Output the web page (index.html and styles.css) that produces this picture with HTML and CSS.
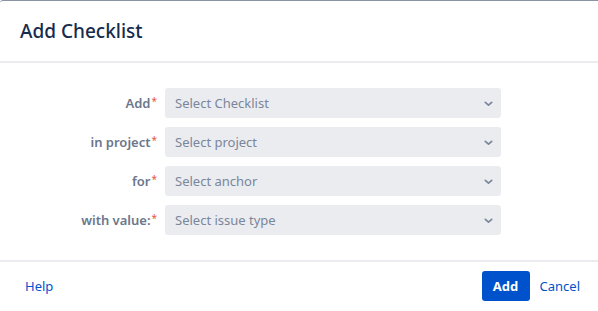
FILE: index.html
```html
<!DOCTYPE html>
<html lang="en">
<head>
    <meta charset="UTF-8">
    <meta name="viewport" content="width=device-width, initial-scale=1.0">
    <title>Add Checklist</title>
    <link rel="stylesheet" href="styles.css">
</head>
<body>
    <div class="dialog">
        <div class="dialog-header">
            <h1>Add Checklist</h1>
        </div>

        <!-- Form fields -->
        <div class="dialog-body">
            <div class="form-grid">
                <label class="field-label">Add<span class="req">*</span></label>
                <div class="select-box">
                    <span class="placeholder">Select Checklist</span>
                    <svg class="chevron" width="9" height="6" viewBox="0 0 9 6"><path d="M1.3 1.3 L4.5 4.2 L7.7 1.3" fill="none" stroke="#7a869a" stroke-width="1.7" stroke-linecap="round" stroke-linejoin="round"/></svg>
                </div>

                <label class="field-label">in project<span class="req">*</span></label>
                <div class="select-box">
                    <span class="placeholder">Select project</span>
                    <svg class="chevron" width="9" height="6" viewBox="0 0 9 6"><path d="M1.3 1.3 L4.5 4.2 L7.7 1.3" fill="none" stroke="#7a869a" stroke-width="1.7" stroke-linecap="round" stroke-linejoin="round"/></svg>
                </div>

                <label class="field-label">for<span class="req">*</span></label>
                <div class="select-box">
                    <span class="placeholder">Select anchor</span>
                    <svg class="chevron" width="9" height="6" viewBox="0 0 9 6"><path d="M1.3 1.3 L4.5 4.2 L7.7 1.3" fill="none" stroke="#7a869a" stroke-width="1.7" stroke-linecap="round" stroke-linejoin="round"/></svg>
                </div>

                <label class="field-label">with value:<span class="req">*</span></label>
                <div class="select-box">
                    <span class="placeholder">Select issue type</span>
                    <svg class="chevron" width="9" height="6" viewBox="0 0 9 6"><path d="M1.3 1.3 L4.5 4.2 L7.7 1.3" fill="none" stroke="#7a869a" stroke-width="1.7" stroke-linecap="round" stroke-linejoin="round"/></svg>
                </div>
            </div>
        </div>

        <div class="dialog-footer">
            <a class="link" href="#">Help</a>
            <div class="actions">
                <button class="primary">Add</button>
                <a class="link" href="#">Cancel</a>
            </div>
        </div>
    </div>
</body>
</html>
```

FILE: styles.css
```css
body {
    margin: 0;
    font-family: "Noto Sans", "Open Sans", sans-serif;
    font-size: 14px;
    background-color: #fff;
    color: #172b4d;
}

.dialog {
    border-top: 1px solid #8993a4;
    border-top-left-radius: 3px;
    height: 310px;
    display: flex;
    flex-direction: column;
}

.dialog-header {
    height: 60px;
    display: flex;
    align-items: center;
    padding: 0 20px;
    border-bottom: 2px solid #ebecf0;
}

.dialog-header h1 {
    margin: 0;
    font-size: 19px;
    font-weight: 500;
    color: #172b4d;
}

.dialog-body {
    padding: 25px 0 25px 0;
    border-bottom: 2px solid #ebecf0;
}

.form-grid {
    display: grid;
    grid-template-columns: 157px 336px;
    column-gap: 8px;
    row-gap: 9px;
    align-items: center;
}

.field-label {
    text-align: right;
    font-weight: 600;
    font-size: 13px;
    color: #6b778c;
}

.req {
    color: #e5573a;
    font-size: 10px;
    font-weight: 400;
    vertical-align: 3px;
    margin-left: 1px;
}

.select-box {
    height: 30px;
    background-color: #ebecf0;
    border-radius: 3px;
    display: flex;
    align-items: center;
    justify-content: space-between;
    padding: 0 8px 0 10px;
    box-sizing: border-box;
}

.placeholder {
    color: #7a869a;
    font-size: 13px;
}

.chevron {
    margin-top: 1px;
}

.dialog-footer {
    flex: 1;
    display: flex;
    align-items: center;
    justify-content: space-between;
    padding: 0 18px 0 25px;
    margin-top: -2px;
}

.actions {
    display: flex;
    align-items: center;
    gap: 10px;
}

.link {
    color: #0052cc;
    text-decoration: none;
    font-size: 13px;
}

.primary {
    height: 30px;
    width: 48px;
    border: none;
    border-radius: 3px;
    background-color: #0052cc;
    color: #fff;
    font-family: inherit;
    font-size: 13px;
    font-weight: 700;
    padding: 0;
    cursor: pointer;
}
```
